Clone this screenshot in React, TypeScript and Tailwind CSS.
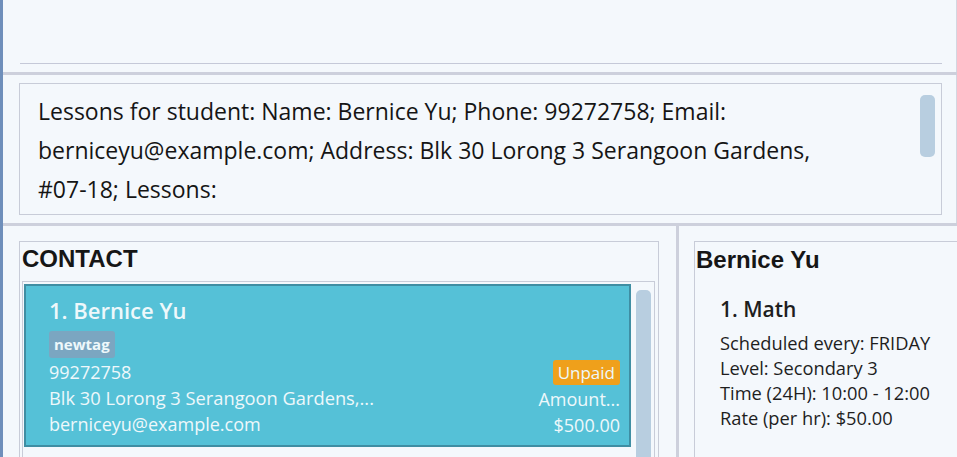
import React from "react";

const ui = { fontFamily: "'Open Sans', 'Noto Sans', sans-serif" };
const arial = { fontFamily: "'Liberation Sans', Arial, sans-serif" };

function PersonCard() {
  return (
    <div className="flex justify-between bg-[#55c1d7] border-2 border-[#3f8ea3] h-[163px] pl-[23px] pr-[9px] text-[#eef8fb]" style={ui}>
      <div className="flex flex-col pt-[9px]">
        <div className="text-[22px] font-semibold leading-[30px]">1. Bernice Yu</div>
        <div className="mt-[6px] self-start rounded-[3px] bg-[#7ba6c1] px-[5px] h-[27px] flex items-center text-[15px] font-bold">newtag</div>
        <div className="text-[18px] leading-[26px] mt-[1px]">99272758</div>
        <div className="text-[18.3px] leading-[26px]">Blk 30 Lorong 3 Serangoon Gardens,...</div>
        <div className="text-[18px] leading-[26px]">berniceyu@example.com</div>
      </div>
      <div className="flex flex-col items-end justify-end pb-[7px]">
        <div className="rounded-[3px] bg-[#efa01b] px-[5px] h-[25px] flex items-center text-[17px] mb-[1px]">Unpaid</div>
        <div className="text-[18px] leading-[26px]">Amount...</div>
        <div className="text-[18px] leading-[26px]">$500.00</div>
      </div>
    </div>
  );
}

function Lesson() {
  return (
    <div className="pl-[24px] pt-[16px] text-[#1e1e1e]" style={ui}>
      <div className="text-[21px] font-semibold leading-[30px]">1. Math</div>
      <div className="mt-[6px] text-[18.3px] leading-[25px]">
        <div>Scheduled every: FRIDAY</div>
        <div>Level: Secondary 3</div>
        <div>Time (24H): 10:00 - 12:00</div>
        <div>Rate (per hr): $50.00</div>
      </div>
    </div>
  );
}

export default function App() {
  return (
    <div className="flex w-[957px] h-[457px] overflow-hidden bg-[#f4f8fc]">
      <div className="w-[3px] bg-[#6f8fbb]" />
      <div className="flex-1 flex flex-col min-w-0">
        {/* command box area */}
        <div className="h-[72px] flex flex-col justify-end pb-[8px] pl-[17px] pr-[14px] border-r border-[#d3d6e0]">
          <div className="h-px bg-[#c5c9d8]" />
        </div>
        <div className="h-[3px] bg-[#cdd0dc]" />

        {/* result display */}
        <div className="h-[148px] pt-[8px] pl-[16px] pr-[14px] border-r border-[#d3d6e0]">
          <div className="relative h-[132px] border border-[#c8ccd8] bg-[#f4f8fc] pl-[18px] pr-[50px] pt-[8px]">
            <p className="text-[23px] leading-[39px] text-[#151515]" style={ui}>
              Lessons for student: Name: Bernice Yu; Phone: 99272758; Email: berniceyu@example.com; Address: Blk 30 Lorong 3 Serangoon Gardens, <span className="whitespace-nowrap">#07-18;</span> Lessons:
            </p>
            <div className="absolute right-[6px] top-[11px] w-[15px] h-[62px] rounded-[5px] bg-[#b8cee0]" />
          </div>
        </div>
        <div className="h-[3px] bg-[#cdd0dc]" />

        {/* bottom panels */}
        <div className="flex-1 flex min-h-0">
          <div className="w-[673px] pl-[16px] pr-[17px] pt-[15px]">
            <div className="h-full border border-b-0 border-[#c8ccd8] pl-[2px] pr-[3px]">
              <div className="h-[39px] pb-[6px] flex items-center text-[24px] font-bold text-[#161616]" style={arial}>CONTACT</div>
              <div className="h-full flex border border-b-0 border-[#c8ccd8] pt-[2px] pl-px pr-[3px]">
                <div className="flex-1">
                  <PersonCard />
                </div>
                <div className="w-[15px] ml-[5px] mt-[6px] rounded-t-[5px] bg-[#b8cee0]" />
              </div>
            </div>
          </div>
          <div className="w-[3px] bg-[#cdd0dc]" />
          <div className="flex-1 pl-[15px] pt-[15px]">
            <div className="h-full border-l border-t border-[#c8ccd8] pl-px">
              <div className="h-[36px] flex items-center text-[24px] font-bold text-[#161616]" style={arial}>Bernice Yu</div>
              <Lesson />
            </div>
          </div>
        </div>
      </div>
    </div>
  );
}
